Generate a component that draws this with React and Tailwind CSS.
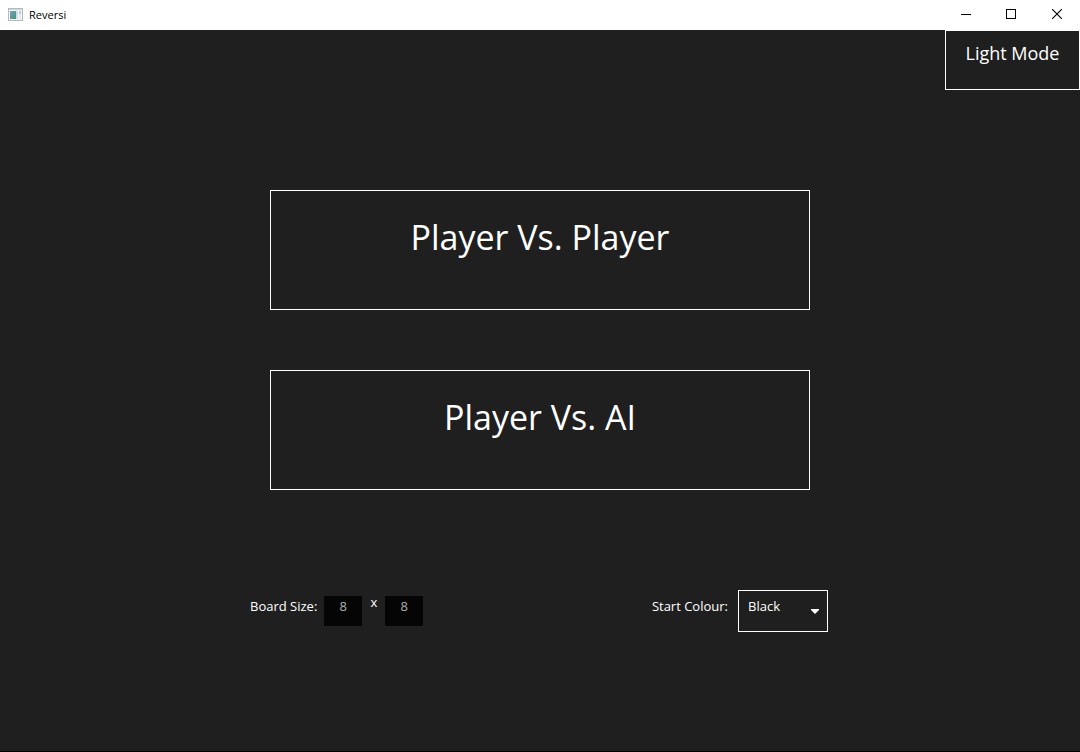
import { useState } from "react";

function AppIcon() {
  return (
    <svg width="16" height="14" viewBox="0 0 16 14" aria-hidden="true">
      <defs>
        <linearGradient id="pane" x1="0" y1="0" x2="1" y2="1">
          <stop offset="0" stopColor="#7d9fc0" />
          <stop offset="1" stopColor="#3f9478" />
        </linearGradient>
      </defs>
      <rect x="0.5" y="0.5" width="14" height="12" fill="#f2f4f6" stroke="#b4b8bd" />
      <rect x="1" y="1" width="13" height="1" fill="#ccd3da" />
      <rect x="2" y="3" width="6" height="8" fill="url(#pane)" />
      <rect x="8" y="3" width="2" height="8" fill="#d3dde4" />
      <rect x="11" y="3" width="2" height="3" fill="#b3cfe0" />
      <rect x="11" y="6" width="2" height="5" fill="#e8ecea" />
    </svg>
  );
}

function TitleBar() {
  return (
    <header className="flex h-[30px] items-center justify-between bg-white text-black">
      <div className="flex items-center gap-[5px] pl-2">
        <AppIcon />
        <h1 className="text-[11px] leading-4">Reversi</h1>
      </div>
      <div className="flex h-7 self-start">
        <button type="button" aria-label="Minimize" className="flex w-11 items-center justify-center">
          <svg width="10" height="10" viewBox="0 0 10 10" shapeRendering="crispEdges" aria-hidden="true">
            <rect y="5" width="10" height="1" />
          </svg>
        </button>
        <button type="button" aria-label="Maximize" className="flex w-[46px] items-center justify-center">
          <svg width="10" height="10" viewBox="0 0 10 10" shapeRendering="crispEdges" aria-hidden="true">
            <rect x="0.5" y="0.5" width="9" height="9" fill="none" stroke="black" />
          </svg>
        </button>
        <button type="button" aria-label="Close" className="flex w-[46px] items-center justify-center">
          <svg width="10" height="10" viewBox="0 0 10 10" aria-hidden="true">
            <path d="M0 0L10 10M10 0L0 10" stroke="black" strokeWidth="1.1" />
          </svg>
        </button>
      </div>
    </header>
  );
}

function SizeInput({ id, label, value, onChange }) {
  return (
    <input
      id={id}
      type="text"
      inputMode="numeric"
      aria-label={label}
      value={value}
      onChange={(e) => onChange(e.target.value)}
      className="h-[30px] w-[38px] bg-[#050505] pb-[10px] text-center text-[13px] leading-5 text-[#b0b0b0] outline-none"
    />
  );
}

export default function App() {
  const [rows, setRows] = useState("8");
  const [columns, setColumns] = useState("8");
  const [colour, setColour] = useState("Black");

  return (
    <div className="flex min-h-screen flex-col border-b border-black bg-[#1f1f1f] font-['Open_Sans','Noto_Sans',sans-serif] text-white">
      <TitleBar />
      <button type="button" className="h-[60px] w-[135px] self-end border border-white pb-[14px] text-[18px] leading-6">
        Light Mode
      </button>
      <main className="flex flex-col items-center pt-[100px]">
        <div className="flex w-1/2 flex-col gap-[60px]">
          <button type="button" className="h-[120px] border border-white pb-[26px] text-[34px] leading-[48px]">
            Player Vs. Player
          </button>
          <button type="button" className="h-[120px] border border-white pb-[26px] text-[34px] leading-[48px]">
            Player Vs. AI
          </button>
        </div>
        <form className="mt-[100px] flex w-[580px] max-w-full justify-between pr-[2px] text-[13px] leading-5">
          <div className="flex items-start gap-[7px] pt-[6px]">
            <label htmlFor="rows">Board Size:</label>
            <div className="flex items-start">
              <SizeInput id="rows" value={rows} onChange={setRows} />
              <span className="w-[23px] text-center leading-3">x</span>
              <SizeInput id="columns" label="Board columns" value={columns} onChange={setColumns} />
            </div>
          </div>
          <div className="flex items-start gap-[10px]">
            <label htmlFor="colour" className="pt-[6px]">Start Colour:</label>
            <div className="relative">
              <select
                id="colour"
                value={colour}
                onChange={(e) => setColour(e.target.value)}
                className="block h-[42px] w-[90px] appearance-none border border-white bg-[#1f1f1f] pb-[10px] pl-[9px] leading-5 outline-none"
              >
                <option>Black</option>
                <option>White</option>
              </select>
              <svg width="8" height="5" viewBox="0 0 8 5" className="pointer-events-none absolute top-[19px] right-[9px]" aria-hidden="true">
                <path d="M0 0H8V1L4 5L0 1Z" fill="white" />
              </svg>
            </div>
          </div>
        </form>
      </main>
    </div>
  );
}
